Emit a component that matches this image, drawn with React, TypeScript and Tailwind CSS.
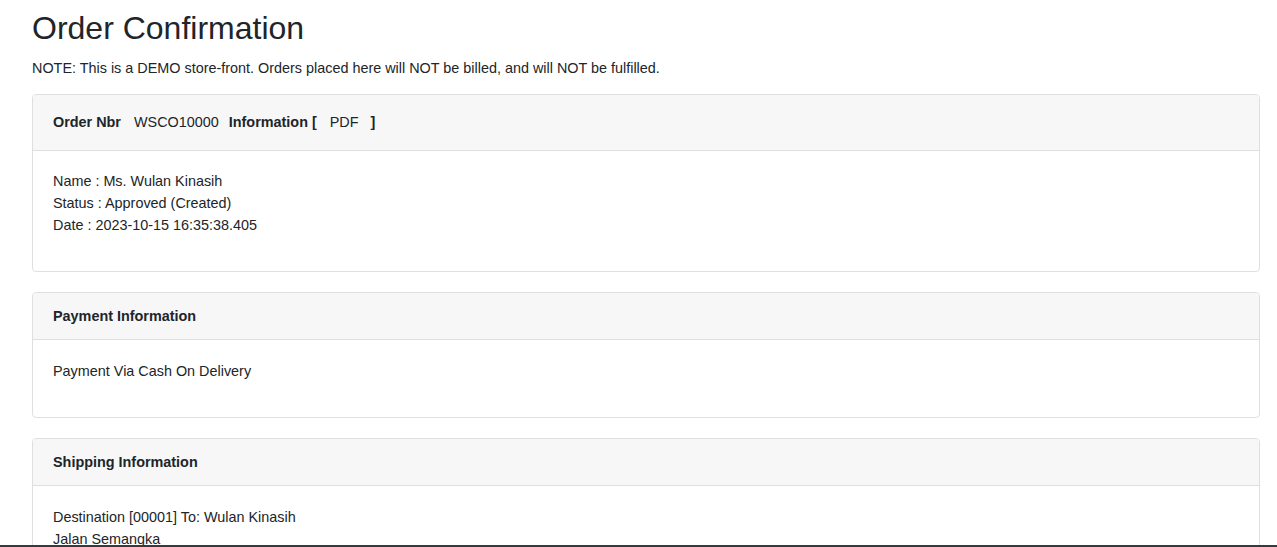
import React from "react";

type CardProps = {
  header: React.ReactNode;
  children: React.ReactNode;
  tall?: boolean;
};

const Card = ({ header, children, tall }: CardProps) => (
  <div className="mb-5 overflow-hidden rounded-[4px] border border-[#dfdfdf] bg-white">
    <div
      className={`flex items-center border-b border-[#dfdfdf] bg-[#f7f7f7] px-5 ${
        tall ? "h-[56px]" : "h-[47px]"
      }`}
    >
      {header}
    </div>
    <div className={`px-5 ${tall ? "pt-[19px] pb-[35px]" : "pt-5 pb-[35px]"}`}>{children}</div>
  </div>
);

const App = () => {
  return (
    <div
      className="min-h-screen bg-white text-[14.4px] leading-[22px] text-[#212529]"
      style={{ fontFamily: '"Liberation Sans", Arial, sans-serif' }}
    >
      <div className="ml-[32px] w-[1228px] pt-[9px]">
        <h1 className="text-[32px] leading-[38px] font-normal">Order Confirmation</h1>
        <p className="mt-[10px] mb-[15px]">
          NOTE: This is a DEMO store-front. Orders placed here will NOT be billed, and will NOT be fulfilled.
        </p>

        <Card
          tall
          header={
            <div className="-mt-[2px] flex items-center">
              <span className="font-bold">Order Nbr</span>
              <span className="ml-[13px]">WSCO10000</span>
              <span className="ml-[10px] font-bold">Information [</span>
              <a className="ml-[13px] cursor-pointer">PDF</a>
              <span className="ml-[12px] font-bold">]</span>
            </div>
          }
        >
          <div>Name : Ms. Wulan Kinasih</div>
          <div>Status : Approved (Created)</div>
          <div>Date : 2023-10-15 16:35:38.405</div>
        </Card>

        <Card header={<span className="font-bold">Payment Information</span>}>
          <div>Payment Via Cash On Delivery</div>
        </Card>

        <Card header={<span className="font-bold">Shipping Information</span>}>
          <div>Destination [00001] To: Wulan Kinasih</div>
          <div>Jalan Semangka</div>
          <div>Jakarta Selatan</div>
          <div>Indonesia</div>
        </Card>
      </div>

      <div className="fixed right-0 bottom-0 left-0 h-[2px] bg-[#343a40]" />
    </div>
  );
};

export default App;
